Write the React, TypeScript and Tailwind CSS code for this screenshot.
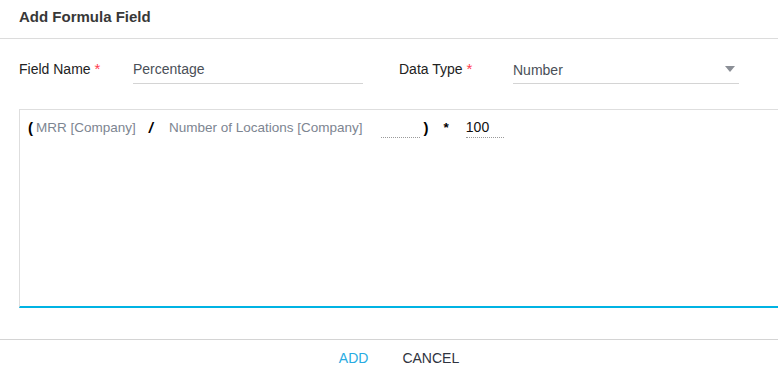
import React from "react";

const font = { fontFamily: '"Liberation Sans", Arial, sans-serif' };

function Req() {
  return <span className="ml-[4px] text-[15px] text-[#ff3b4e]">*</span>;
}

function FormulaLine() {
  return (
    <div className="flex items-end h-[22px] text-[13.5px] leading-[20px]">
      <span className="ml-[8px] font-bold text-black text-[15px]">(</span>
      <span className="ml-[3px] text-[#7d8591]">MRR [Company]</span>
      <span className="ml-[13px] font-bold italic text-black text-[15px]">/</span>
      <span className="ml-[16px] text-[#7d8591]">Number of Locations [Company]</span>
      <span className="ml-[18px] w-[39px] h-[20px] border-b border-dotted border-[#9a9a9a]" />
      <span className="ml-[4px] font-bold text-black text-[15px]">)</span>
      <span className="ml-[15px] font-bold text-black">*</span>
      <span className="ml-[17px] w-[38px] border-b border-dotted border-[#9a9a9a] text-[#111] text-[14px]">100</span>
    </div>
  );
}

export default function App() {
  return (
    <div className="w-[778px] h-[381px] bg-white overflow-hidden flex flex-col" style={font}>
      <div className="h-[39px] shrink-0 border-b border-[#dcdcdc] px-[19px] flex items-center">
        <span className="text-[15px] font-bold text-[#383838] pb-[3px]">Add Formula Field</span>
      </div>

      <div className="flex items-start pt-[20px] px-[19px] h-[70px] text-[14px]">
        <div className="w-[114px] text-[#222] leading-[20px]">
          Field Name<Req />
        </div>
        <div className="w-[230px] h-[25px] border-b border-[#d4d4d4] text-[#4a4f57] leading-[20px]">Percentage</div>
        <div className="ml-[36px] w-[114px] text-[#222] leading-[20px]">
          Data Type<Req />
        </div>
        <div className="w-[226px] h-[25px] border-b border-[#d4d4d4] text-[#4a4f57] leading-[20px] flex justify-between pt-[1px]">
          <span>Number</span>
          <svg width="10" height="6" viewBox="0 0 10 6" className="mr-[4px] mt-[6px]">
            <path d="M0 0h10L5 6z" fill="#8b8f96" />
          </svg>
        </div>
      </div>

      <div className="ml-[19px] w-[770px] h-[199px] shrink-0 border-t border-l border-[#dedede] border-b-2 border-b-[#00b3e3] pt-[6px]">
        <FormulaLine />
      </div>

      <div className="mt-[31px] border-t border-[#d4d4d4] flex justify-center items-center gap-[34px] pt-[8px] text-[14px] pl-[20px]">
        <span className="text-[#29abe2]">ADD</span>
        <span className="text-[#2f3440]">CANCEL</span>
      </div>
    </div>
  );
}
